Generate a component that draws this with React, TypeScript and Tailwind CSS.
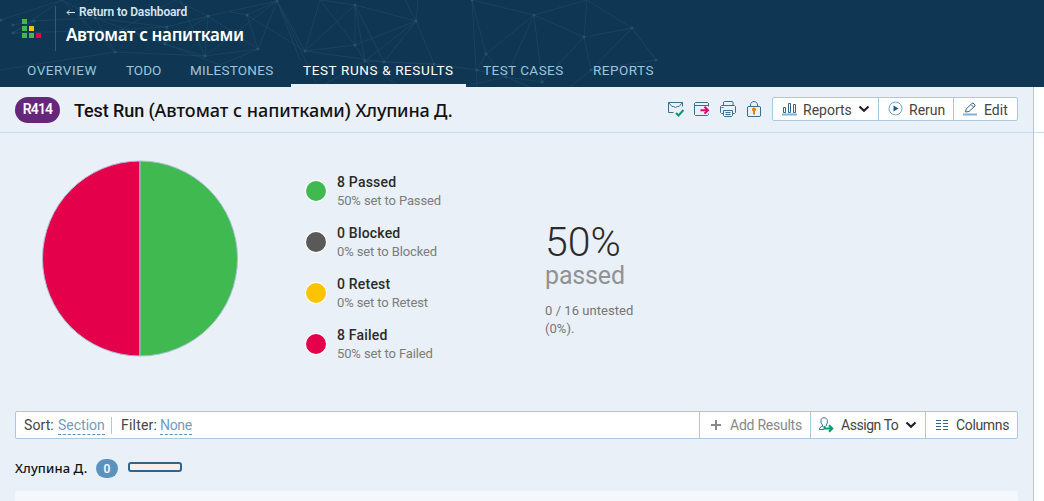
import type { ReactNode } from "react";

const NODES: [number, number][] = [
  [1, 20], [13, 25], [13, 33], [34, 21], [95, 18], [115, 52], [167, 27], [165, 44], [208, 16], [205, 56],
  [247, 15], [258, 49], [277, 1], [305, 51], [355, 5], [355, 45], [365, 61], [384, 62], [416, 21], [434, 64],
  [472, 0], [486, 54], [477, 70], [506, 77], [534, 15], [542, 82], [584, 37], [591, 70], [632, 28], [656, 60],
];

const MESH =
  "M1 20L62 0L13 33L34 21L95 18L62 0M13 25L34 21M13 33L115 30L167 27M62 0L115 52L95 18L167 27L208 16L175 0L120 30M95 18L165 44L205 56L115 52L0 70M167 27L165 44L208 16L205 56L180 0M208 16L258 49L205 56L277 1L208 16M165 44L220 65L258 49M247 15L277 1L258 49L247 15L230 12M247 15L305 51L277 1L300 60M320 0L305 51L355 5L320 0L355 45L305 51L384 62M277 1L318 87M355 5L416 21L355 45L355 5L365 61L416 21L384 62L355 5M416 21L434 64L365 61L320 87M355 45L365 61L400 87M416 21L405 0M416 21L418 0M472 0L534 15L486 54L472 0L477 87M486 54L477 70L434 64L384 62M534 15L506 77L486 54M534 15L542 82L506 77L460 87M534 15L587 0L584 37L534 15M587 0L632 28L584 37L542 82M584 37L591 70L632 28L656 60L591 70L570 87M477 70L506 77L530 87";

function Latin({ children, className = "" }: { children: ReactNode; className?: string }) {
  return <span className={`font-['Roboto',sans-serif] ${className}`}>{children}</span>;
}

function Chevron() {
  return (
    <svg className="h-[8px] w-[12px] shrink-0" viewBox="0 0 12 8" fill="none">
      <path d="M1.500 1.500L6 5.800L10.500 1.500" stroke="#222" strokeWidth="2.200" />
    </svg>
  );
}

function NavItem({ label, className, active = false }: { label: string; className: string; active?: boolean }) {
  return (
    <div
      className={`flex h-[33px] items-center whitespace-nowrap text-[13.5px] ${
        active ? "border-b-[3px] border-[#e9f0f7] pt-[2px] text-white" : "pb-px text-[#9ec4dc]"
      } ${className}`}
    >
      {label}
    </div>
  );
}

function Header() {
  return (
    <header className="relative h-[87px] overflow-hidden bg-[#0f3652]">
      <svg className="absolute inset-0 h-[87px] w-[700px]" viewBox="0 0 700 87">
        <path d={MESH} fill="none" stroke="#1d4c68" strokeWidth="1" opacity="0.65" />
        {NODES.map(([x, y]) => (
          <circle key={`${x}-${y}`} cx={x} cy={y} r="1.5" fill="#245b78" opacity="0.8" />
        ))}
      </svg>
      <div className="relative flex h-[54px]">
        <div className="w-[55px] pl-[22px] pt-[19px]">
          <svg width="20" height="20" viewBox="0 0 20 20" shapeRendering="crispEdges">
            <path fill="#3fb950" d="M0 0h5v5H0zM0 7h5v5H0zM0 14h5v5H0zM7 14h5v5H7z" />
            <path fill="#fdc300" d="M7 7h5v5H7z" />
            <path fill="#e4004b" d="M14 14h5v5h-5z" />
          </svg>
        </div>
        <div className="mt-[6px] h-[45px] w-px bg-[#2f5d78]" />
        <div className="pl-[10px] pt-[4px]">
          <div className="flex h-[16px] items-center whitespace-nowrap text-[12px] font-semibold text-[#d7e5ef]">
            <svg className="mr-[4px] h-[7px] w-[9px]" viewBox="0 0 9 7" fill="none">
              <path d="M9 3.500H1M3.500 1L1 3.500L3.500 6" stroke="#d7e5ef" />
            </svg>
            <span className="tracking-[-0.13px]">Return to Dashboard</span>
          </div>
          <div className="mt-[4px] h-[22px] whitespace-nowrap font-['Noto_Sans',sans-serif] text-[17px] font-semibold leading-[22px] tracking-[-0.35px] text-white">
            Автомат с напитками
          </div>
        </div>
      </div>
      <nav className="relative flex">
        <NavItem label="OVERVIEW" className="ml-[27px] w-[99px] tracking-[0.55px]" />
        <NavItem label="TODO" className="w-[64px] tracking-[0px]" />
        <NavItem label="MILESTONES" className="w-[101px] tracking-[0.25px]" />
        <NavItem label="TEST RUNS & RESULTS" active className="w-[175px] pl-[12px] tracking-[0.62px]" />
        <NavItem label="TEST CASES" className="ml-[17px] w-[110px] tracking-[0.45px]" />
        <NavItem label="REPORTS" className="tracking-[0.5px]" />
      </nav>
    </header>
  );
}

function TitleIcons() {
  return (
    <div className="flex gap-[10px]">
      <svg width="16" height="16" viewBox="0 0 16 16" fill="none" stroke="#3a6f92">
        <path d="M5.500 11.500H.5V1.500h14v4M.5 1.500L4 5.500h1.500l2 1 2-1H11l3.500-4" />
        <path d="M8 12l2.500 2.500L15.500 9" stroke="#069a72" strokeWidth="2" />
      </svg>
      <svg width="16" height="16" viewBox="0 0 16 16" fill="none" stroke="#3a6f92">
        <path d="M14.500 5.500v-3l-1-1h-12l-1 1v11l1 1h12l1-1v-1M.5 4.500h14" />
        <path d="M6.500 9.200H14M10.500 5.800L14 9.200l-3.500 3.400" stroke="#e8006b" strokeWidth="2" />
      </svg>
      <svg width="16" height="16" viewBox="0 0 16 16" fill="none" stroke="#3a6f92">
        <path d="M3.500 4V1l1-.5h8l.5.5v3M3.500 12.500h-2l-1-1v-6l1-1h13l1 1v6l-1 1h-2" />
        <path d="M3.500 9.500h9v5l-1 1h-7l-1-1zM5.500 11.500h5M5.500 13.500h5" />
        <path d="M1.500 6.500h2" stroke="#069a72" />
      </svg>
      <svg width="16" height="16" viewBox="0 0 16 16" fill="none" stroke="#3a6f92">
        <path d="M4.500 6V4c0-2 1.500-3.500 3.500-3.500S11.500 2 11.500 4v2M2 5.500h12l.5.5v9l-.5.5H2l-.5-.5V6z" />
        <circle cx="8" cy="8.500" r="2" fill="#f07d00" stroke="none" />
        <path d="M8 8v5.500" stroke="#f07d00" strokeWidth="2" />
      </svg>
    </div>
  );
}

function TitleBar() {
  return (
    <div className="flex h-[46px] items-center border-b border-[#c9dcea] pl-[15px]">
      <div className="flex h-[26px] w-[45px] items-center justify-center rounded-full bg-[#66267a] text-[14px] font-semibold tracking-[-0.9px] text-white">
        R414
      </div>
      <h1 className="ml-[14px] w-[594px] whitespace-nowrap pt-[1px] font-['Noto_Sans',sans-serif] text-[18px] font-medium leading-[24px] tracking-[-0.02px] text-[#111]">
        <Latin className="tracking-[-0.1px]">Test Run (</Latin>Автомат с напитками
        <Latin>)</Latin><span className="tracking-[-0.2px]"> Хлупина Д.</span>
      </h1>
      <div className="flex w-[104px] pb-[2px]">
        <TitleIcons />
      </div>
      <div className="mb-[2px] flex h-[24px] w-[246px] rounded-[2px] border border-[#a9c9de] bg-white text-[14px] text-[#444]">
        <div className="flex w-[106px] items-center border-r border-[#a9c9de] pl-[9px]">
          <svg className="mr-[6px]" width="15" height="14" viewBox="0 0 15 14" fill="none">
            <path d="M1.500 5.500h2v5h-2zM6.500 1.500h2v9h-2zM11.500 2.500h2v8h-2z" stroke="#33658a" />
            <path d="M0 12.500h15" stroke="#7fb2d2" strokeWidth="2" />
          </svg>
          <span className="w-[55px] pt-[2px] leading-[20px]">Reports</span>
          <Chevron />
        </div>
        <div className="flex w-[75px] items-center border-r border-[#a9c9de] pl-[9px]">
          <svg className="mr-[6px]" width="15" height="15" viewBox="0 0 15 15" fill="none">
            <circle cx="7.500" cy="7.500" r="6.500" stroke="#6ea5c9" />
            <path d="M5.500 4.500L10.500 7.500L5.500 10.500z" fill="#245a82" />
          </svg>
          <span className="pt-[2px] leading-[20px]">Rerun</span>
        </div>
        <div className="flex items-center pl-[9px]">
          <svg className="mr-[6px]" width="15" height="14" viewBox="0 0 15 14" fill="none">
            <path d="M2.500 10l.8-3L9 1.300l1-.3L12 3v1L6 9.500zM8 2.500L10.500 5" stroke="#33658a" />
            <path d="M0 12.500h14" stroke="#7fb2d2" strokeWidth="2" />
          </svg>
          <span className="pt-[2px] leading-[20px]">Edit</span>
        </div>
      </div>
    </div>
  );
}

const STATUSES = [
  { count: "8 Passed", note: "50% set to Passed", dot: "bg-[#3fb950]" },
  { count: "0 Blocked", note: "0% set to Blocked", dot: "bg-[#595959]" },
  { count: "0 Retest", note: "0% set to Retest", dot: "bg-[#fdc300]" },
  { count: "8 Failed", note: "50% set to Failed", dot: "bg-[#e4004b]" },
];

function Summary() {
  return (
    <section className="flex h-[278px]">
      <div className="w-[306px] pl-[42px] pt-[27px]">
        <svg width="197" height="197" viewBox="0 0 197 197" stroke="#a9c0d8">
          <path d="M98 1a97.500 97.500 0 0 0 0 195z" fill="#e4004b" />
          <path d="M98 1a97.500 97.500 0 0 1 0 195z" fill="#3fb950" />
        </svg>
      </div>
      <div className="w-[239px] pt-[40px]">
        {STATUSES.map((s) => (
          <div key={s.count} className="flex h-[51px]">
            <div className={`mt-[8px] h-[20px] w-[20px] shrink-0 rounded-full ring-1 ring-white ${s.dot}`} />
            <div className="ml-[11px] whitespace-nowrap">
              <div className="h-[19px] text-[14px] font-medium leading-[18px] tracking-[0.2px] text-[#2b2b2b]">
                {s.count}
              </div>
              <div className="text-[13px] leading-[18px] tracking-[-0.12px] text-[#7c7c7c]">{s.note}</div>
            </div>
          </div>
        ))}
      </div>
      <div className="whitespace-nowrap pt-[88px]">
        <div className="h-[42px] text-[41px] font-light leading-[42px] text-[#2b2b2b]">50%</div>
        <div className="h-[39px] text-[25px] leading-[26px] tracking-[-0.15px] text-[#929292]">passed</div>
        <div className="text-[13px] leading-[18px] tracking-[0.05px] text-[#757575]">
          0 / 16 untested
          <br />
          (0%).
        </div>
      </div>
    </section>
  );
}

function Toolbar() {
  return (
    <div className="ml-[15px] flex h-[28px] w-[1003px] rounded-[2px] border border-[#a9c9de] bg-white text-[14px] text-[#444]">
      <div className="flex w-[683px] items-center whitespace-nowrap pl-[8px]">
        <span className="w-[34px] tracking-[0.1px]">Sort:</span>
        <span className="h-[19px] w-[47px] border-b border-dashed border-[#5b93be] pt-px leading-[17px] text-[#6e9cc3]">
          Section
        </span>
        <span className="mx-[6px] mr-[9px] h-[17px] w-px bg-[#a9c9de]" />
        <span className="w-[39px] tracking-[0.2px]">Filter:</span>
        <span className="h-[19px] w-[32px] border-b border-dashed border-[#5b93be] pt-px leading-[17px] tracking-[-0.3px] text-[#6e9cc3]">
          None
        </span>
      </div>
      <div className="flex w-[111px] shrink-0 items-center whitespace-nowrap border-l border-[#a9c9de] pl-[11px] text-[#888]">
        <svg className="mr-[9px]" width="10" height="10" viewBox="0 0 10 10">
          <path d="M5 0v10M0 5h10" stroke="#8a8a8a" strokeWidth="2" />
        </svg>
        <span className="tracking-[-0.25px]">Add Results</span>
      </div>
      <div className="flex w-[115px] shrink-0 items-center whitespace-nowrap border-l border-[#a9c9de] pl-[8px]">
        <svg className="mr-[7px]" width="15" height="16" viewBox="0 0 15 16" fill="none">
          <path
            d="M5 12.500H.5V11l2-1.500h1V8L2 6V3.500C2 1.800 3.200.8 5 .8s3.300 1 3.300 2.700V6l-1 2v1"
            stroke="#3a6f92"
          />
          <path d="M5.500 9v2.500H13M10 8.200l3.300 3.300L10 14.800" stroke="#069a72" strokeWidth="2" />
        </svg>
        <span className="w-[64px] tracking-[-0.45px]">Assign To</span>
        <Chevron />
      </div>
      <div className="flex items-center border-l border-[#a9c9de] pl-[10px]">
        <svg className="mr-[8px]" width="12" height="11" viewBox="0 0 12 11">
          <path d="M0 .5h5M7 .5h5M0 3.500h5M7 3.500h5M0 6.500h5M7 6.500h5M0 9.500h5M7 9.500h5" stroke="#33658a" />
        </svg>
        <span className="tracking-[-0.35px]">Columns</span>
      </div>
    </div>
  );
}

export default function App() {
  return (
    <div className="h-[501px] w-[1044px] overflow-hidden bg-white font-['Roboto',sans-serif]">
      <Header />
      <div className="flex h-[414px]">
        <main className="w-[1034px] border-r border-[#a9c9de] bg-[#e9f0f7]">
          <TitleBar />
          <Summary />
          <Toolbar />
          <div className="ml-[15px] flex h-[52px] pt-[16px]">
            <span className="w-[81px] whitespace-nowrap pt-[3px] font-['Noto_Sans',sans-serif] text-[13px] font-medium leading-[20px] tracking-[0.1px] text-[#111]">
              Хлупина Д.
            </span>
            <span className="mt-[4px] flex h-[19px] w-[22px] items-center justify-center rounded-full bg-[#5b93be] text-[12px] font-medium text-white">
              0
            </span>
            <span className="ml-[10px] mt-[7px] h-[10px] w-[54px] rounded-[3px] border-2 border-[#33658a] bg-[#f1f1f1]" />
          </div>
          <div className="ml-[15px] h-[20px] w-[1003px] rounded-t-[2px] bg-[#f4f8fd]" />
        </main>
        <div className="mt-[45px] h-px flex-1 bg-[#c9dcea]" />
      </div>
    </div>
  );
}
